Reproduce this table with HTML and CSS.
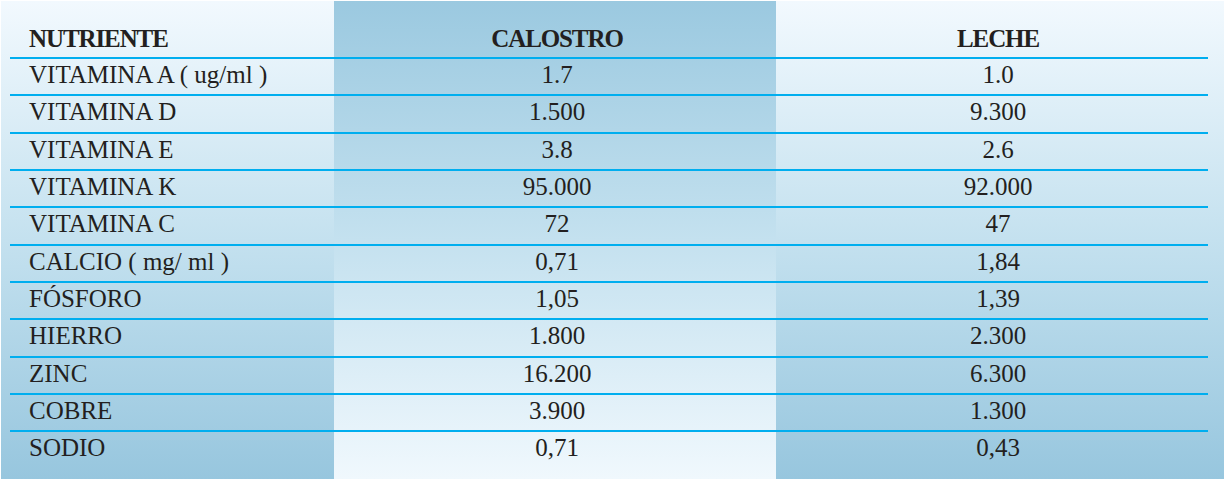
FILE: index.html
```html
<!DOCTYPE html>
<html lang="es">
<head>
<meta charset="utf-8">
<title>Calostro vs Leche</title>
<link rel="stylesheet" href="styles.css">
</head>
<body>
<div class="panel">
  <div class="row head">
    <div class="c1">NUTRIENTE</div><div class="c2">CALOSTRO</div><div class="c3">LECHE</div>
  </div>
  <div class="row"><div class="c1">VITAMINA A ( ug/ml )</div><div class="c2">1.7</div><div class="c3">1.0</div></div>
  <div class="row"><div class="c1">VITAMINA D</div><div class="c2">1.500</div><div class="c3">9.300</div></div>
  <div class="row"><div class="c1">VITAMINA E</div><div class="c2">3.8</div><div class="c3">2.6</div></div>
  <div class="row"><div class="c1">VITAMINA K</div><div class="c2">95.000</div><div class="c3">92.000</div></div>
  <div class="row"><div class="c1">VITAMINA C</div><div class="c2">72</div><div class="c3">47</div></div>
  <div class="row"><div class="c1">CALCIO ( mg/ ml )</div><div class="c2">0,71</div><div class="c3">1,84</div></div>
  <div class="row"><div class="c1">FÓSFORO</div><div class="c2">1,05</div><div class="c3">1,39</div></div>
  <div class="row"><div class="c1">HIERRO</div><div class="c2">1.800</div><div class="c3">2.300</div></div>
  <div class="row"><div class="c1">ZINC</div><div class="c2">16.200</div><div class="c3">6.300</div></div>
  <div class="row"><div class="c1">COBRE</div><div class="c2">3.900</div><div class="c3">1.300</div></div>
  <div class="row last"><div class="c1">SODIO</div><div class="c2">0,71</div><div class="c3">0,43</div></div>
</div>
</body>
</html>
```

FILE: styles.css
```css
html, body {
  margin: 0;
  padding: 0;
  background: #ffffff;
}

.panel {
  box-sizing: border-box;
  width: 1223px;
  height: 478px;
  margin: 1px 0 0 1px;
  padding: 0 16px 0 9px;
  display: flex;
  flex-direction: column;
  font-family: "Liberation Serif", "Times New Roman", serif;
  font-size: 25px;
  color: #231f20;
  background:
    linear-gradient(to bottom, #f2f9fe 0%, #c4e1ef 50%, #97c6de 100%) 0 0 / 333px 100% no-repeat,
    linear-gradient(to bottom, #9bc9e0 0%, #c4e1ef 50%, #f0f8fd 100%) 333px 0 / 442px 100% no-repeat,
    linear-gradient(to bottom, #f2f9fe 0%, #c4e1ef 50%, #97c6de 100%) 775px 0 / 448px 100% no-repeat;
}

.row {
  box-sizing: border-box;
  flex: none;
  display: grid;
  grid-template-columns: 324px 442px 432px;
  height: 37px;
  line-height: 32px;
  border-top: 2px solid #00aeef;
  white-space: nowrap;
}

.row:nth-child(3n) {
  height: 38px;
}

.head {
  height: 56px;
  border-top: 0;
  padding-top: 21.6px;
  font-weight: bold;
  letter-spacing: -1.1px;
}

.row.last {
  height: 48px;
}

.c1 {
  padding-left: 19px;
}

.c2 {
  text-align: center;
  padding-left: 4px;
}

.c3 {
  text-align: center;
  padding-left: 12px;
}
```
